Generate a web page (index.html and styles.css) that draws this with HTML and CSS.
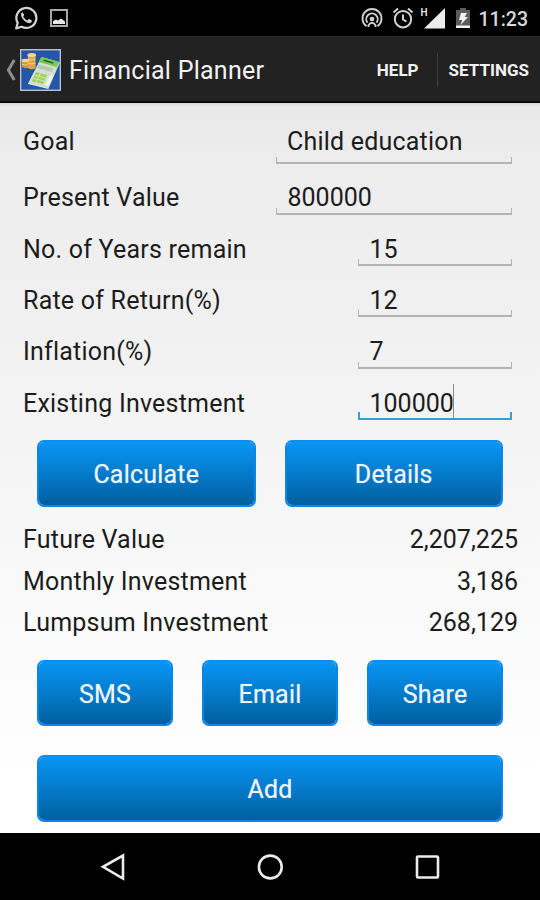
FILE: index.html
```html
<!DOCTYPE html>
<html lang="en">

<head>
    <meta charset="UTF-8">
    <meta name="viewport" content="width=device-width, initial-scale=1.0">
    <title>Financial Planner</title>
    <link rel="stylesheet" href="styles.css">
</head>

<body>
    <div class="status">
        <svg class="whatsapp" width="24" height="25" viewBox="0 0 24 25" fill="none" stroke="#d4d4d4">
            <path d="M2.2 22.4l1.500-5.500a10 10 0 1 1 3.900 3.800z" stroke-width="2.200" stroke-linejoin="round" />
            <path d="M8.600 6.300c-2 .8-2 3-.8 5.300 1.700 3 4 4.800 6.400 5.500 2.200.5 3.700-.8 3.700-2.700l-3-1.600-1.500 1.700c-1.900-.8-3.300-2.200-4.200-4l1.100-1.500z" fill="#d4d4d4" stroke="none" />
        </svg>
        <svg class="picture" width="18" height="18" viewBox="0 0 18 18">
            <rect x="1" y="1" width="16" height="16" fill="none" stroke="#a8a8a8" stroke-width="2" />
            <path d="M3 15v-3l3-1.500 2 1 3-2 4 3V15z" fill="#e6e6e6" />
        </svg>
        <div class="status-right">
            <svg class="cast" width="22" height="22" viewBox="0 0 22 22" fill="none" stroke="#d0d0d0" stroke-width="1.900">
                <path d="M5.500 19.200a9.500 9.500 0 1 1 11 0" />
                <path d="M6.500 15.700a5.700 5.700 0 1 1 9 0" />
                <circle cx="11" cy="12" r="2.300" fill="#d0d0d0" stroke="none" />
                <path d="M7.500 20v-2q3.500-4.500 7 0v2" />
            </svg>
            <svg class="alarm" width="22" height="22" viewBox="0 0 22 22" fill="none" stroke="#d0d0d0" stroke-width="2">
                <circle cx="11" cy="12.200" r="8.200" />
                <path d="M1.500 5.500L6 1.500M20.500 5.500L16 1.500M11 7.500v5l3.500 2.200" />
            </svg>
            <div class="signal">
                <span>H</span>
                <svg width="21" height="21" viewBox="0 0 21 21"><path d="M21 0v20.500H0z" fill="#ececec" /></svg>
            </div>
            <svg class="battery" width="14" height="21" viewBox="0 0 14 21">
                <path d="M4 0h6v2h4v18H0V2h4z" fill="#5c5c5c" />
                <path d="M0 17.500h14V20H0z" fill="#f2f2f2" />
                <path d="M5 5h6L8.700 9H12l-7.500 8 1.700-5H3z" fill="#f2f2f2" />
            </svg>
            <span class="clock">11:23</span>
        </div>
    </div>

    <div class="bar">
        <svg class="back" width="10" height="22" viewBox="0 0 10 22"><path d="M8.300 1L2.400 11l5.900 10" fill="none" stroke="#8c8c8c" stroke-width="3" /></svg>
        <svg class="logo" width="41" height="42" viewBox="0 0 42 42" preserveAspectRatio="none">
            <rect x=".7" y=".7" width="40.600" height="40.600" fill="#2456a8" stroke="#b9c1d0" stroke-width="1.400" />
            <!-- coins -->
            <path d="M2 11h9v7q-4 2.500-9 0z" fill="#d39435" />
            <path d="M8 6q4-3 8 0v13q-4 2.500-8 0z" fill="#e0a548" />
            <path d="M8 10q4 2 8 0M8 14q4 2 8 0M2 15q4 2 6 0" stroke="#f3cf8c" fill="none" />
            <ellipse cx="12" cy="6" rx="4.500" ry="2" fill="#f5d594" />
            <ellipse cx="5.500" cy="11.500" rx="4" ry="1.800" fill="#f5d594" />
            <!-- calculator -->
            <path d="M22 8l18 5q1 0 .6 1L29 40 8 35z" fill="#d5e0d0" />
            <path d="M22 8l18 5-2.500 5L19 13z" fill="#79c94d" />
            <path d="M24.500 10.500l10 2.700-.8 1.500-10-2.700z" fill="#286833" />
            <path d="M19.500 15.500l15 4-2 3.500-15-4z" fill="#b4c9b5" />
            <path d="M16.500 23l11.500 3-4.500 9-11.500-2.500z" fill="#9fd262" />
            <path d="M15 26l11.500 3M14 29.500l11 2.500M21 24l-4.500 9" stroke="#d8e6a4" fill="none" />
            <path d="M31 26l3 1-5 10-3-1z" fill="#eff4ea" />
        </svg>
        <h1>Financial Planner</h1>
        <span class="help">HELP</span>
        <span class="settings">SETTINGS</span>
    </div>

    <div class="content">
        <div class="row goal"><label>Goal</label><div class="field wide">Child education</div></div>
        <div class="row"><label>Present Value</label><div class="field wide num">800000</div></div>
        <div class="row"><label>No. of Years remain</label><div class="field num">15</div></div>
        <div class="row"><label>Rate of Return(%)</label><div class="field num">12</div></div>
        <div class="row"><label>Inflation(%)</label><div class="field num">7</div></div>
        <div class="row"><label>Existing Investment</label><div class="field num focus">100000<i class="caret"></i></div></div>

        <div class="buttons">
            <button>Calculate</button>
            <button>Details</button>
        </div>

        <div class="results">
            <div class="result"><label>Future Value</label><span>2,207,225</span></div>
            <div class="result"><label>Monthly Investment</label><span>3,186</span></div>
            <div class="result"><label>Lumpsum Investment</label><span>268,129</span></div>
        </div>

        <div class="buttons share">
            <button>SMS</button>
            <button>Email</button>
            <button>Share</button>
        </div>
        <div class="buttons">
            <button>Add</button>
        </div>
    </div>

    <div class="nav">
        <svg width="28" height="28" viewBox="0 0 28 28"><path d="M24 2.500v23L4 13.800z" /></svg>
        <svg width="28" height="28" viewBox="0 0 28 28"><circle cx="14.300" cy="14" r="11.400" /></svg>
        <svg width="28" height="28" viewBox="0 0 28 28"><rect x="4" y="3.500" width="21" height="21" rx="1" /></svg>
    </div>
</body>

</html>
```

FILE: styles.css
```css
* {
    padding: 0;
    margin: 0;
    box-sizing: border-box;
}

body {
    width: 540px;
    height: 900px;
    display: flex;
    flex-direction: column;
    overflow: hidden;
    background: #000;
    font-family: Roboto, "Noto Sans", sans-serif;
    font-size: 25px;
    color: #1c1c1c;
}

svg {
    display: block;
    flex: none;
}

/* status bar */
.status {
    height: 36px;
    display: flex;
    align-items: center;
    padding: 0 12px 0 14px;
}

.picture {
    margin-left: 12px;
}

.status-right {
    display: flex;
    align-items: center;
    margin-left: auto;
}

.alarm {
    margin-left: 9px;
}

.signal {
    display: flex;
    align-items: flex-start;
    margin-left: 7px;
}

.signal span {
    width: 3px;
    font-size: 10px;
    line-height: 10px;
    font-weight: 700;
    color: #ddd;
}

.battery {
    margin-left: 11px;
}

.clock {
    margin-left: 9px;
    font-size: 19.5px;
    font-weight: 500;
    line-height: 36px;
    padding-top: 3px;
    color: #d8d8d8;
}

/* action bar */
.bar {
    height: 67px;
    display: flex;
    align-items: center;
    padding: 2px 11px 0 6px;
    background: #222;
    border-top: 1px solid #2b2b2b;
    border-bottom: 2px solid #050505;
    color: #f3f3f3;
}

.logo {
    margin-left: 4px;
}

h1 {
    margin-left: 8px;
    font-size: 25px;
    font-weight: 400;
    letter-spacing: 0.25px;
    white-space: nowrap;
}

.help,
.settings {
    font-size: 17px;
    font-weight: 700;
    line-height: 34px;
}

.help {
    margin-left: auto;
    padding-right: 18px;
    border-right: 1px solid #3d3d3d;
}

.settings {
    padding-left: 11px;
}

/* form */
.content {
    height: 730px;
    background: linear-gradient(#d2d2d2, #e8e8e8 4px, #ededed 60px, #f0f0f0 200px, #fff 680px);
}

label {
    letter-spacing: 0.22px;
}

.row {
    height: 51.3px;
    display: flex;
    align-items: flex-end;
    justify-content: space-between;
    padding: 0 28px 0 23px;
    line-height: 33.4px;
}

.goal {
    height: 60.6px;
    line-height: 42.6px;
}

.field {
    position: relative;
    width: 154px;
    padding-left: 11px;
    letter-spacing: 0.2px;
    white-space: nowrap;
}

.wide {
    width: 236px;
}

.num {
    padding-left: 11.5px;
    letter-spacing: 0;
}

.field::after {
    content: '';
    position: absolute;
    left: 0;
    right: 0;
    bottom: 0;
    height: 5px;
    border: 1px solid #b4b4b4;
    border-bottom-width: 2px;
    border-top: 0;
}

.focus::after {
    border-color: #3f9ccb;
    border-width: 0 2px 2px;
    height: 6px;
}

.caret {
    display: inline-block;
    width: 1px;
    height: 34px;
    margin: -8px 0 0 -1px;
    vertical-align: middle;
    background: #8a8a8a;
}

.buttons {
    display: flex;
    gap: 29px;
    padding: 20px 37px 0;
}

button {
    flex: 1;
    height: 66.6px;
    padding-top: 2px;
    border: 2px solid #0c86e6;
    border-top-color: #0a8ff0;
    border-radius: 7px;
    background: linear-gradient(#0996f5, #005f9f) padding-box;
    color: #eef5fb;
    font: inherit;
    letter-spacing: 0.2px;
    text-shadow: 0 0 1px #7ab8e8;
}

.results {
    padding: 12.4px 22px 0 23px;
}

.result {
    display: flex;
    justify-content: space-between;
    line-height: 41.6px;
}

.share {
    padding-top: 16px;
    padding-bottom: 9px;
}

/* navigation bar */
.nav {
    height: 67px;
    display: flex;
    align-items: center;
    justify-content: center;
    gap: 129px;
}

.nav path,
.nav circle,
.nav rect {
    fill: none;
    stroke: #ececec;
    stroke-width: 2.6;
}
```
